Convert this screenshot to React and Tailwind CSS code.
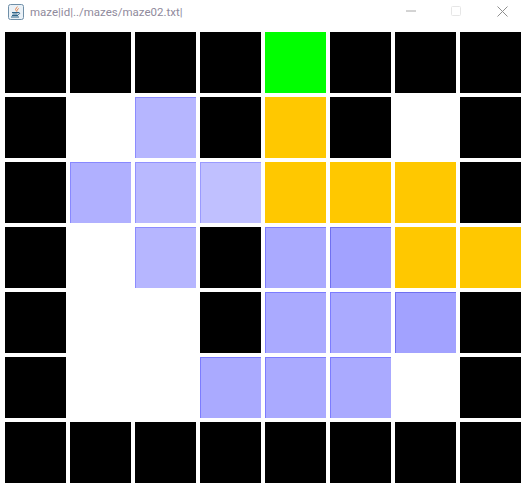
import React from 'react';

const K = { fill: 'bg-black' };
const W = { fill: 'bg-white' };
const G = { fill: 'bg-[#00ff00]' };
const Y = { fill: 'bg-[#ffc800]' };

// visited cells get darker the more often they were walked
const B0 = { fill: 'bg-[#c0c0ff] border-t border-l border-[#9a9aff]' };
const B1 = { fill: 'bg-[#b9b9ff] border-t border-l border-[#9292ff]' };
const B2 = { fill: 'bg-[#b6b6ff] border-t border-l border-[#8c8cff]' };
const B3 = { fill: 'bg-[#b0b0ff] border-t border-l border-[#8888ff]' };
const B4 = { fill: 'bg-[#aaaaff] border-t border-l border-[#7c7cff]' };
const B5 = { fill: 'bg-[#a2a2ff] border-t border-l border-[#7070f0]' };

const rows = [
  [K, K, K, K, G, K, K, K],
  [K, W, B2, K, Y, K, W, K],
  [K, B3, B1, B0, Y, Y, Y, K],
  [K, W, B2, K, B4, B5, Y, Y],
  [K, W, W, K, B4, B4, B5, K],
  [K, W, W, B4, B4, B4, W, K],
  [K, K, K, K, K, K, K, K],
];

const JavaIcon = () => (
  <svg width="16" height="16" viewBox="0 0 16 16" className="shrink-0">
    <rect x="0.5" y="0.5" width="15" height="15" rx="2" fill="#eaf1f7" stroke="#6f8fa8" />
    <path d="M9.5 2C10 4 7 5 7.5 7.5C6.5 6 7.5 4.5 8.5 3.5Z" fill="#e8671c" />
    <path d="M10.5 4.5C10 5.5 8.5 6 8.8 7.6" fill="none" stroke="#e8671c" />
    <path d="M4 8.5H10M4.5 10H9.5M4 11.5H10" stroke="#2f6488" strokeWidth="1" />
    <path d="M10 8.5C12 8 12.5 10 10 10.5" fill="none" stroke="#2f6488" />
    <path d="M3 13H11" stroke="#2f6488" />
  </svg>
);

export default function App() {
  return (
    <div className="w-[523px] h-[483px] bg-white overflow-hidden">
      <div className="h-8 flex items-start">
        <div className="flex items-center gap-[6px] pl-2 pt-1">
          <JavaIcon />
          <span className="text-[11.5px] leading-4 text-[#8f8a9c] font-['Roboto',sans-serif]">
            maze|id|../mazes/maze02.txt|
          </span>
        </div>
        <div className="ml-auto flex items-center h-[22px] pr-[1px]">
          <div className="w-10 flex justify-center">
            <svg width="10" height="10" viewBox="0 0 10 10">
              <path d="M0 5H10" stroke="#a8a8a8" strokeWidth="1" />
            </svg>
          </div>
          <div className="w-10 ml-[5px] flex justify-center">
            <svg width="10" height="10" viewBox="0 0 10 10">
              <rect x="0.5" y="0.5" width="9" height="9" rx="1" fill="none" stroke="#e6e6e6" />
            </svg>
          </div>
          <div className="w-10 ml-[6px] flex justify-center">
            <svg width="11" height="11" viewBox="0 0 11 11">
              <path d="M0.5 0.5L10.5 10.5M10.5 0.5L0.5 10.5" stroke="#8f8f8f" strokeWidth="1" />
            </svg>
          </div>
        </div>
      </div>
      <div className="pl-[5px] grid grid-cols-[repeat(8,61px)] auto-rows-[61px] gap-1">
        {rows.flat().map((cell, i) => (
          <div key={i} className={cell.fill} />
        ))}
      </div>
    </div>
  );
}
